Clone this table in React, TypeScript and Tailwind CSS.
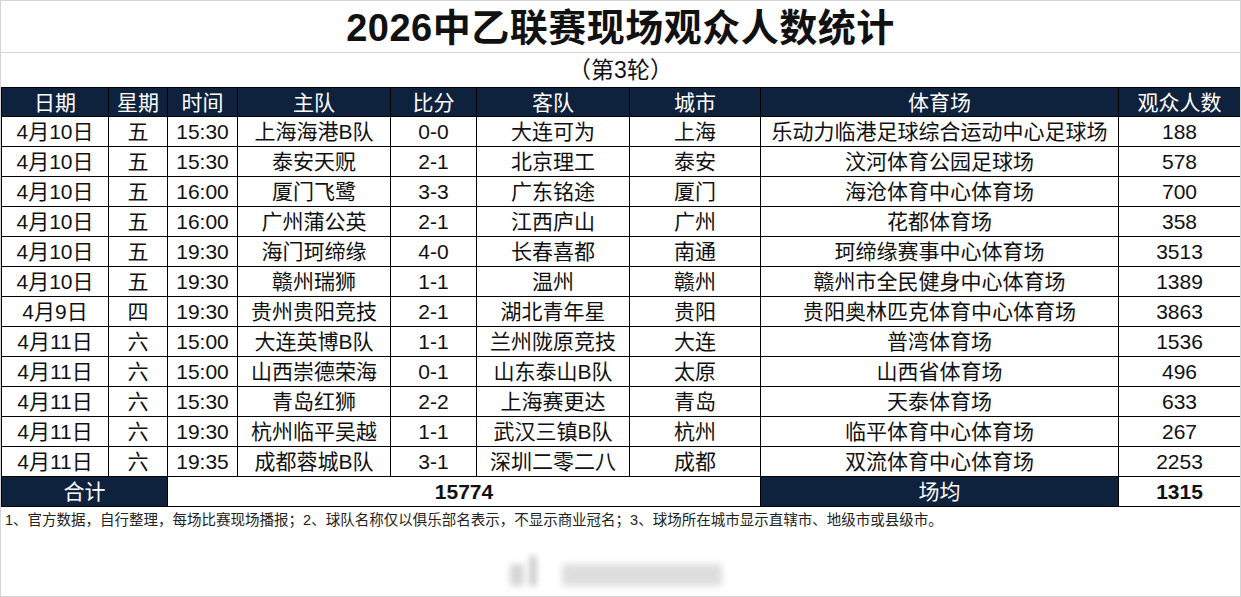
const rows = [
  ["4月10日", "五", "15:30", "上海海港B队", "0-0", "大连可为", "上海", "乐动力临港足球综合运动中心足球场", "188"],
  ["4月10日", "五", "15:30", "泰安天贶", "2-1", "北京理工", "泰安", "汶河体育公园足球场", "578"],
  ["4月10日", "五", "16:00", "厦门飞鹭", "3-3", "广东铭途", "厦门", "海沧体育中心体育场", "700"],
  ["4月10日", "五", "16:00", "广州蒲公英", "2-1", "江西庐山", "广州", "花都体育场", "358"],
  ["4月10日", "五", "19:30", "海门珂缔缘", "4-0", "长春喜都", "南通", "珂缔缘赛事中心体育场", "3513"],
  ["4月10日", "五", "19:30", "赣州瑞狮", "1-1", "温州", "赣州", "赣州市全民健身中心体育场", "1389"],
  ["4月9日", "四", "19:30", "贵州贵阳竞技", "2-1", "湖北青年星", "贵阳", "贵阳奥林匹克体育中心体育场", "3863"],
  ["4月11日", "六", "15:00", "大连英博B队", "1-1", "兰州陇原竞技", "大连", "普湾体育场", "1536"],
  ["4月11日", "六", "15:00", "山西崇德荣海", "0-1", "山东泰山B队", "太原", "山西省体育场", "496"],
  ["4月11日", "六", "15:30", "青岛红狮", "2-2", "上海赛更达", "青岛", "天泰体育场", "633"],
  ["4月11日", "六", "19:30", "杭州临平吴越", "1-1", "武汉三镇B队", "杭州", "临平体育中心体育场", "267"],
  ["4月11日", "六", "19:35", "成都蓉城B队", "3-1", "深圳二零二八", "成都", "双流体育中心体育场", "2253"],
]

const heads = ["日期", "星期", "时间", "主队", "比分", "客队", "城市", "体育场", "观众人数"]
const widths = [107, 59, 70, 153, 86, 153, 131, 358, 122]

export default function App() {
  return (
    <div className="w-[1241px] h-[597px] bg-white border border-[#d4d4d4] text-[#111] font-['Liberation_Sans','Noto_Sans_CJK_SC',sans-serif] flex flex-col overflow-hidden">
      {/* 标题 */}
      <div className="h-[52px] border-b border-[#d4d4d4] flex items-center justify-center shrink-0">
        <h1 className="text-[38px] font-semibold leading-none tracking-[0.5px] pt-[2px]">2026中乙联赛现场观众人数统计</h1>
      </div>
      <div className="h-[34px] flex items-center justify-center shrink-0">
        <span className="text-[23px] leading-none">（第3轮）</span>
      </div>

      <table className="table-fixed border-collapse w-[1239px] text-[21px] leading-none">
        <colgroup>
          {widths.map((w, i) => (
            <col key={i} style={{ width: w }} />
          ))}
        </colgroup>
        <thead>
          <tr className="h-[29px] bg-[#0f223d] text-white">
            {heads.map((h) => (
              <th key={h} className="border border-black font-normal p-0 text-center">
                {h}
              </th>
            ))}
          </tr>
        </thead>
        <tbody>
          {rows.map((r, i) => (
            <tr key={i} className="h-[30px]">
              {r.map((c, j) => (
                <td key={j} className="border border-black p-0 text-center whitespace-nowrap">
                  {c}
                </td>
              ))}
            </tr>
          ))}
          <tr className="h-[30px]">
            <td colSpan={2} className="border border-black bg-[#0f223d] text-white p-0 text-center">合计</td>
            <td colSpan={5} className="border border-black p-0 text-center font-bold">15774</td>
            <td className="border border-black bg-[#0f223d] text-white p-0 text-center">场均</td>
            <td className="border border-black p-0 text-center font-bold">1315</td>
          </tr>
        </tbody>
      </table>

      <div className="pl-[4px] pt-[6px] text-[14.5px] leading-none text-[#222] whitespace-nowrap">
        1、官方数据，自行整理，每场比赛现场播报；2、球队名称仅以俱乐部名表示，不显示商业冠名；3、球场所在城市显示直辖市、地级市或县级市。
      </div>

      {/* 水印 */}
      <div className="flex-1 flex items-end justify-center pb-[10px]">
        <div className="flex items-end gap-[6px] blur-[3px] opacity-60 ml-[-10px]">
          <div className="w-[14px] h-[22px] bg-[#bbb]" />
          <div className="w-[6px] h-[30px] bg-[#999]" />
          <div className="w-[160px] h-[22px] bg-[#c8c8c8] ml-[20px]" />
        </div>
      </div>
    </div>
  )
}
